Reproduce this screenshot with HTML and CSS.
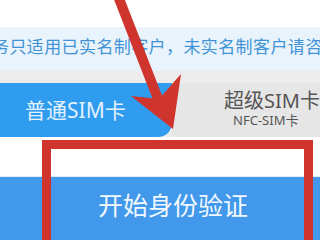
FILE: index.html
```html
<!DOCTYPE html>
<html lang="zh">
<head>
  <meta charset="UTF-8">
  <meta name="viewport" content="width=device-width, initial-scale=1.0">
  <title>身份验证</title>
  <link rel="stylesheet" href="styles.css">
</head>
<body>
  <div class="screen">
    <div class="top"></div>
    <div class="notice">务只适用已实名制客户，未实名制客户请咨</div>
    <div class="tabs">
      <div class="tab active">普通SIM卡</div>
      <div class="tab other">
        <span class="tab-title">超级SIM卡</span>
        <span class="tab-sub">NFC-SIM卡</span>
      </div>
    </div>
    <div class="space"></div>
    <div class="start">开始身份验证</div>

    <svg class="marks" width="320" height="240" viewBox="0 0 320 240">
      <line x1="118" y1="-4" x2="160" y2="104" stroke="#cf352d" stroke-width="10"/>
      <polygon points="173,129 131,96 159,99 181,74" fill="#cf352d"/>
      <rect x="46.5" y="144.5" width="262" height="120" fill="none" stroke="#cf352d" stroke-width="9"/>
    </svg>
  </div>
</body>
</html>
```

FILE: styles.css
```css
body {
  margin: 0;
  font-family: "Noto Sans", "Noto Sans CJK SC", sans-serif;
  background: white;
}
.screen {
  position: relative;
  width: 320px;
  height: 240px;
  overflow: hidden;
}
.top {
  height: 27px;
  background: white;
}
.notice {
  height: 44px;
  line-height: 40px;
  background: #e9f3fb;
  color: #4193d6;
  font-size: 17px;
  letter-spacing: 0.4px;
  white-space: nowrap;
  overflow: hidden;
  margin-left: -8px;
}
.tabs {
  display: flex;
  height: 66px;
  background: #ececec;
  padding-top: 12px;
  box-sizing: border-box;
}
.tab {
  height: 54px;
  box-sizing: border-box;
}
.active {
  width: 174px;
  background: #2f9cf0;
  color: #e3f1fd;
  font-size: 21px;
  line-height: 54px;
  padding-left: 25px;
  border-bottom-right-radius: 14px;
}
.other {
  flex: 1;
  background: #e6e6e6;
  display: flex;
  flex-direction: column;
  gap: 1px;
  padding-left: 52px;
  padding-top: 7px;
}
.tab-title {
  font-size: 20px;
  line-height: 22px;
  color: #555;
  white-space: nowrap;
}
.tab-sub {
  font-size: 13px;
  line-height: 15px;
  color: #555;
  padding-left: 9px;
  white-space: nowrap;
}
.space {
  height: 39px;
  background: white;
  border-bottom: 1px solid #e3eaf2;
}
.start {
  height: 80px;
  background: #4298ea;
  color: #f2f8ff;
  font-size: 25px;
  line-height: 56px;
  padding-left: 98px;
  white-space: nowrap;
}
.marks {
  position: absolute;
  left: 0;
  top: 0;
}
```
